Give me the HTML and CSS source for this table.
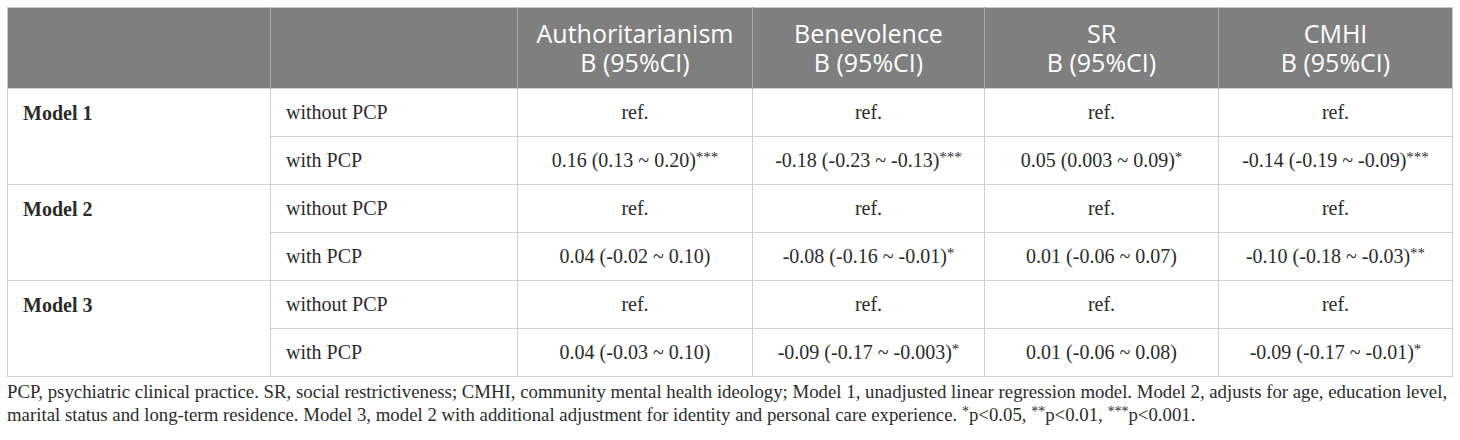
FILE: index.html
```html
<!DOCTYPE html>
<html lang="en">
<head>
    <meta charset="UTF-8">
    <meta name="viewport" content="width=device-width, initial-scale=1.0">
    <title>Table</title>
    <link rel="stylesheet" href="styles.css">
</head>
<body>
    <div class="wrap">
        <table class="results">
            <colgroup>
                <col style="width: 263px">
                <col style="width: 247px">
                <col style="width: 235px">
                <col style="width: 232px">
                <col style="width: 234px">
                <col style="width: 234px">
            </colgroup>
            <thead>
                <tr>
                    <th></th>
                    <th></th>
                    <th>Authoritarianism<br>B (95%CI)</th>
                    <th>Benevolence<br>B (95%CI)</th>
                    <th>SR<br>B (95%CI)</th>
                    <th>CMHI<br>B (95%CI)</th>
                </tr>
            </thead>
            <tbody>
                <tr>
                    <td class="model" rowspan="2">Model 1</td>
                    <td class="group">without PCP</td>
                    <td>ref.</td>
                    <td>ref.</td>
                    <td>ref.</td>
                    <td>ref.</td>
                </tr>
                <tr>
                    <td class="group">with PCP</td>
                    <td>0.16 (0.13 ~ 0.20)<sup>***</sup></td>
                    <td>-0.18 (-0.23 ~ -0.13)<sup>***</sup></td>
                    <td>0.05 (0.003 ~ 0.09)<sup>*</sup></td>
                    <td>-0.14 (-0.19 ~ -0.09)<sup>***</sup></td>
                </tr>
                <tr>
                    <td class="model" rowspan="2">Model 2</td>
                    <td class="group">without PCP</td>
                    <td>ref.</td>
                    <td>ref.</td>
                    <td>ref.</td>
                    <td>ref.</td>
                </tr>
                <tr>
                    <td class="group">with PCP</td>
                    <td>0.04 (-0.02 ~ 0.10)</td>
                    <td>-0.08 (-0.16 ~ -0.01)<sup>*</sup></td>
                    <td>0.01 (-0.06 ~ 0.07)</td>
                    <td>-0.10 (-0.18 ~ -0.03)<sup>**</sup></td>
                </tr>
                <tr>
                    <td class="model" rowspan="2">Model 3</td>
                    <td class="group">without PCP</td>
                    <td>ref.</td>
                    <td>ref.</td>
                    <td>ref.</td>
                    <td>ref.</td>
                </tr>
                <tr>
                    <td class="group">with PCP</td>
                    <td>0.04 (-0.03 ~ 0.10)</td>
                    <td>-0.09 (-0.17 ~ -0.003)<sup>*</sup></td>
                    <td>0.01 (-0.06 ~ 0.08)</td>
                    <td>-0.09 (-0.17 ~ -0.01)<sup>*</sup></td>
                </tr>
            </tbody>
        </table>
        <p class="note">PCP, psychiatric clinical practice. SR, social restrictiveness; CMHI, community mental health ideology; Model 1, unadjusted linear regression model. Model 2, adjusts for age, education level, marital status and long-term residence. Model 3, model 2 with additional adjustment for identity and personal care experience. <sup>*</sup>p&lt;0.05, <sup>**</sup>p&lt;0.01, <sup>***</sup>p&lt;0.001.</p>
    </div>
</body>
</html>
```

FILE: styles.css
```css
* {
    margin: 0;
    padding: 0;
    box-sizing: border-box;
}
body {
    background: #fff;
    color: #2b2b2b;
    font-family: "Liberation Serif", "Times New Roman", serif;
}
.wrap {
    padding: 7px 0 0 7px;
}
.results {
    border-collapse: collapse;
    table-layout: fixed;
    width: 1445px;
    border: 1px solid #c9c9c9;
}
.results th {
    background: #7f7f7f;
    color: #fff;
    font-family: "Open Sans", sans-serif;
    font-weight: 400;
    font-size: 25px;
    line-height: 29px;
    height: 81px;
    text-align: center;
    border-left: 1px solid #a6a6a6;
    padding: 0 4px;
}
.results th:first-child {
    border-left: none;
}
.results td {
    font-size: 20px;
    line-height: 23px;
    height: 48px;
    text-align: center;
    border: 1px solid #cfcfcf;
    padding: 0 8px;
}
.results td.model {
    text-align: left;
    vertical-align: top;
    font-weight: 700;
    padding: 13px 15px;
}
.results td.group {
    text-align: left;
    padding-left: 15px;
}
.results sup {
    font-size: 15px;
    vertical-align: 5px;
    line-height: 0;
}
.note {
    margin-top: 3px;
    font-size: 18.8px;
    line-height: 23px;
}
.note sup {
    font-size: 14px;
    vertical-align: 5px;
    line-height: 0;
}
```
